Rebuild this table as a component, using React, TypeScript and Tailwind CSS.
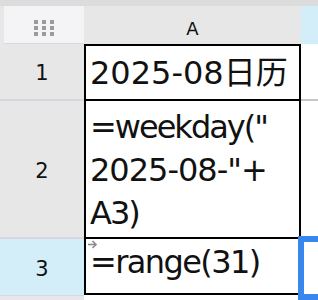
import React from "react";

const cellFont = { fontFamily: '"DejaVu Sans", "Noto Sans CJK SC", sans-serif' };

function GridIcon() {
  // 3x3 block glyph in the corner cell
  const xs = [0, 8, 16];
  const ys = [0, 6, 12];
  return (
    <svg width="20" height="16" viewBox="0 0 20 16">
      {ys.map((y) =>
        xs.map((x) => <rect key={`${x}-${y}`} x={x} y={y} width="4" height="4" fill="#9b9b9b" />)
      )}
    </svg>
  );
}

function JumpArrow() {
  return (
    <svg width="11" height="9" viewBox="0 0 11 9" fill="none" stroke="#8a8a8a" strokeWidth="1.6">
      <path d="M1 4.5h8" />
      <path d="M5.5 1l3.5 3.5-3.5 3.5" />
    </svg>
  );
}

export default function App() {
  return (
    <div className="relative w-[318px] h-[300px] overflow-hidden bg-[#e7e7e7]" style={cellFont}>
      <div className="h-[6px] bg-[#dcdcdc]" />

      {/* column header row */}
      <div className="flex h-[38px]">
        <div className="w-[4px] bg-[#e7e7e7]" />
        <div className="w-[80px] bg-[#f4f4f6] border-b border-[#d9d9df] flex justify-center pt-[14px]">
          <GridIcon />
        </div>
        <div className="w-[217px] bg-[#e7e7e7] flex justify-center pt-[12px] text-[18px] leading-[21px] text-[#111]">
          A
        </div>
        <div className="flex-1 bg-[#d3eef9]" />
      </div>

      {/* row 1 */}
      <div className="flex h-[55px]">
        <div className="w-[84px] flex items-center justify-center pt-[3px] text-[21px] leading-[24px] text-[#111]">
          1
        </div>
        <div className="w-[217px] bg-white border-x-2 border-t-2 border-black pl-[4px] pt-[6px] text-[32px] leading-[43px] text-[#111] whitespace-nowrap">
          2025-08日历
        </div>
        <div className="flex-1 bg-white" />
      </div>

      {/* row 2 */}
      <div className="flex h-[138px]">
        <div className="w-[84px] border-t-2 border-[#d7d7df] flex items-center justify-center pt-[4px] text-[21px] leading-[24px] text-[#111]">
          2
        </div>
        <div className="w-[217px] bg-white border-x-2 border-t-2 border-black pl-[4px] pt-[5px] text-[32px] leading-[43px] text-[#111] whitespace-nowrap">
          <div className="tracking-[-2px]">=weekday("</div>
          <div className="tracking-[-1px]">2025-08-"+</div>
          <div className="tracking-[-2px]">A3)</div>
        </div>
        <div className="flex-1 bg-white border-t-2 border-[#c6c6c6]" />
      </div>

      {/* row 3, active */}
      <div className="flex h-[58px]">
        <div className="w-[84px] border-t-2 border-[#d7d7df] bg-[#d3eef9] flex items-center justify-center pt-[4px] text-[21px] leading-[24px] text-[#111]">
          3
        </div>
        <div className="relative w-[217px] bg-white border-x-2 border-y-2 border-black pl-[4px] pt-[2px] text-[32px] leading-[43px] text-[#111] whitespace-nowrap">
          <div className="absolute left-[1px] top-[1px]">
            <JumpArrow />
          </div>
          <div className="tracking-[-1.6px]">=range(31)</div>
        </div>
        <div className="flex-1 bg-white" />
      </div>

      <div className="flex h-[5px]">
        <div className="w-[84px] border-t border-[#d7d7df]" />
        <div className="w-[217px] bg-white" />
        <div className="flex-1 bg-white" />
      </div>

      {/* selection bracket on B3 */}
      <div className="absolute left-[298px] top-[236px] w-[40px] h-[64px] border-[6px] border-[#3a86ef]" />
    </div>
  );
}
